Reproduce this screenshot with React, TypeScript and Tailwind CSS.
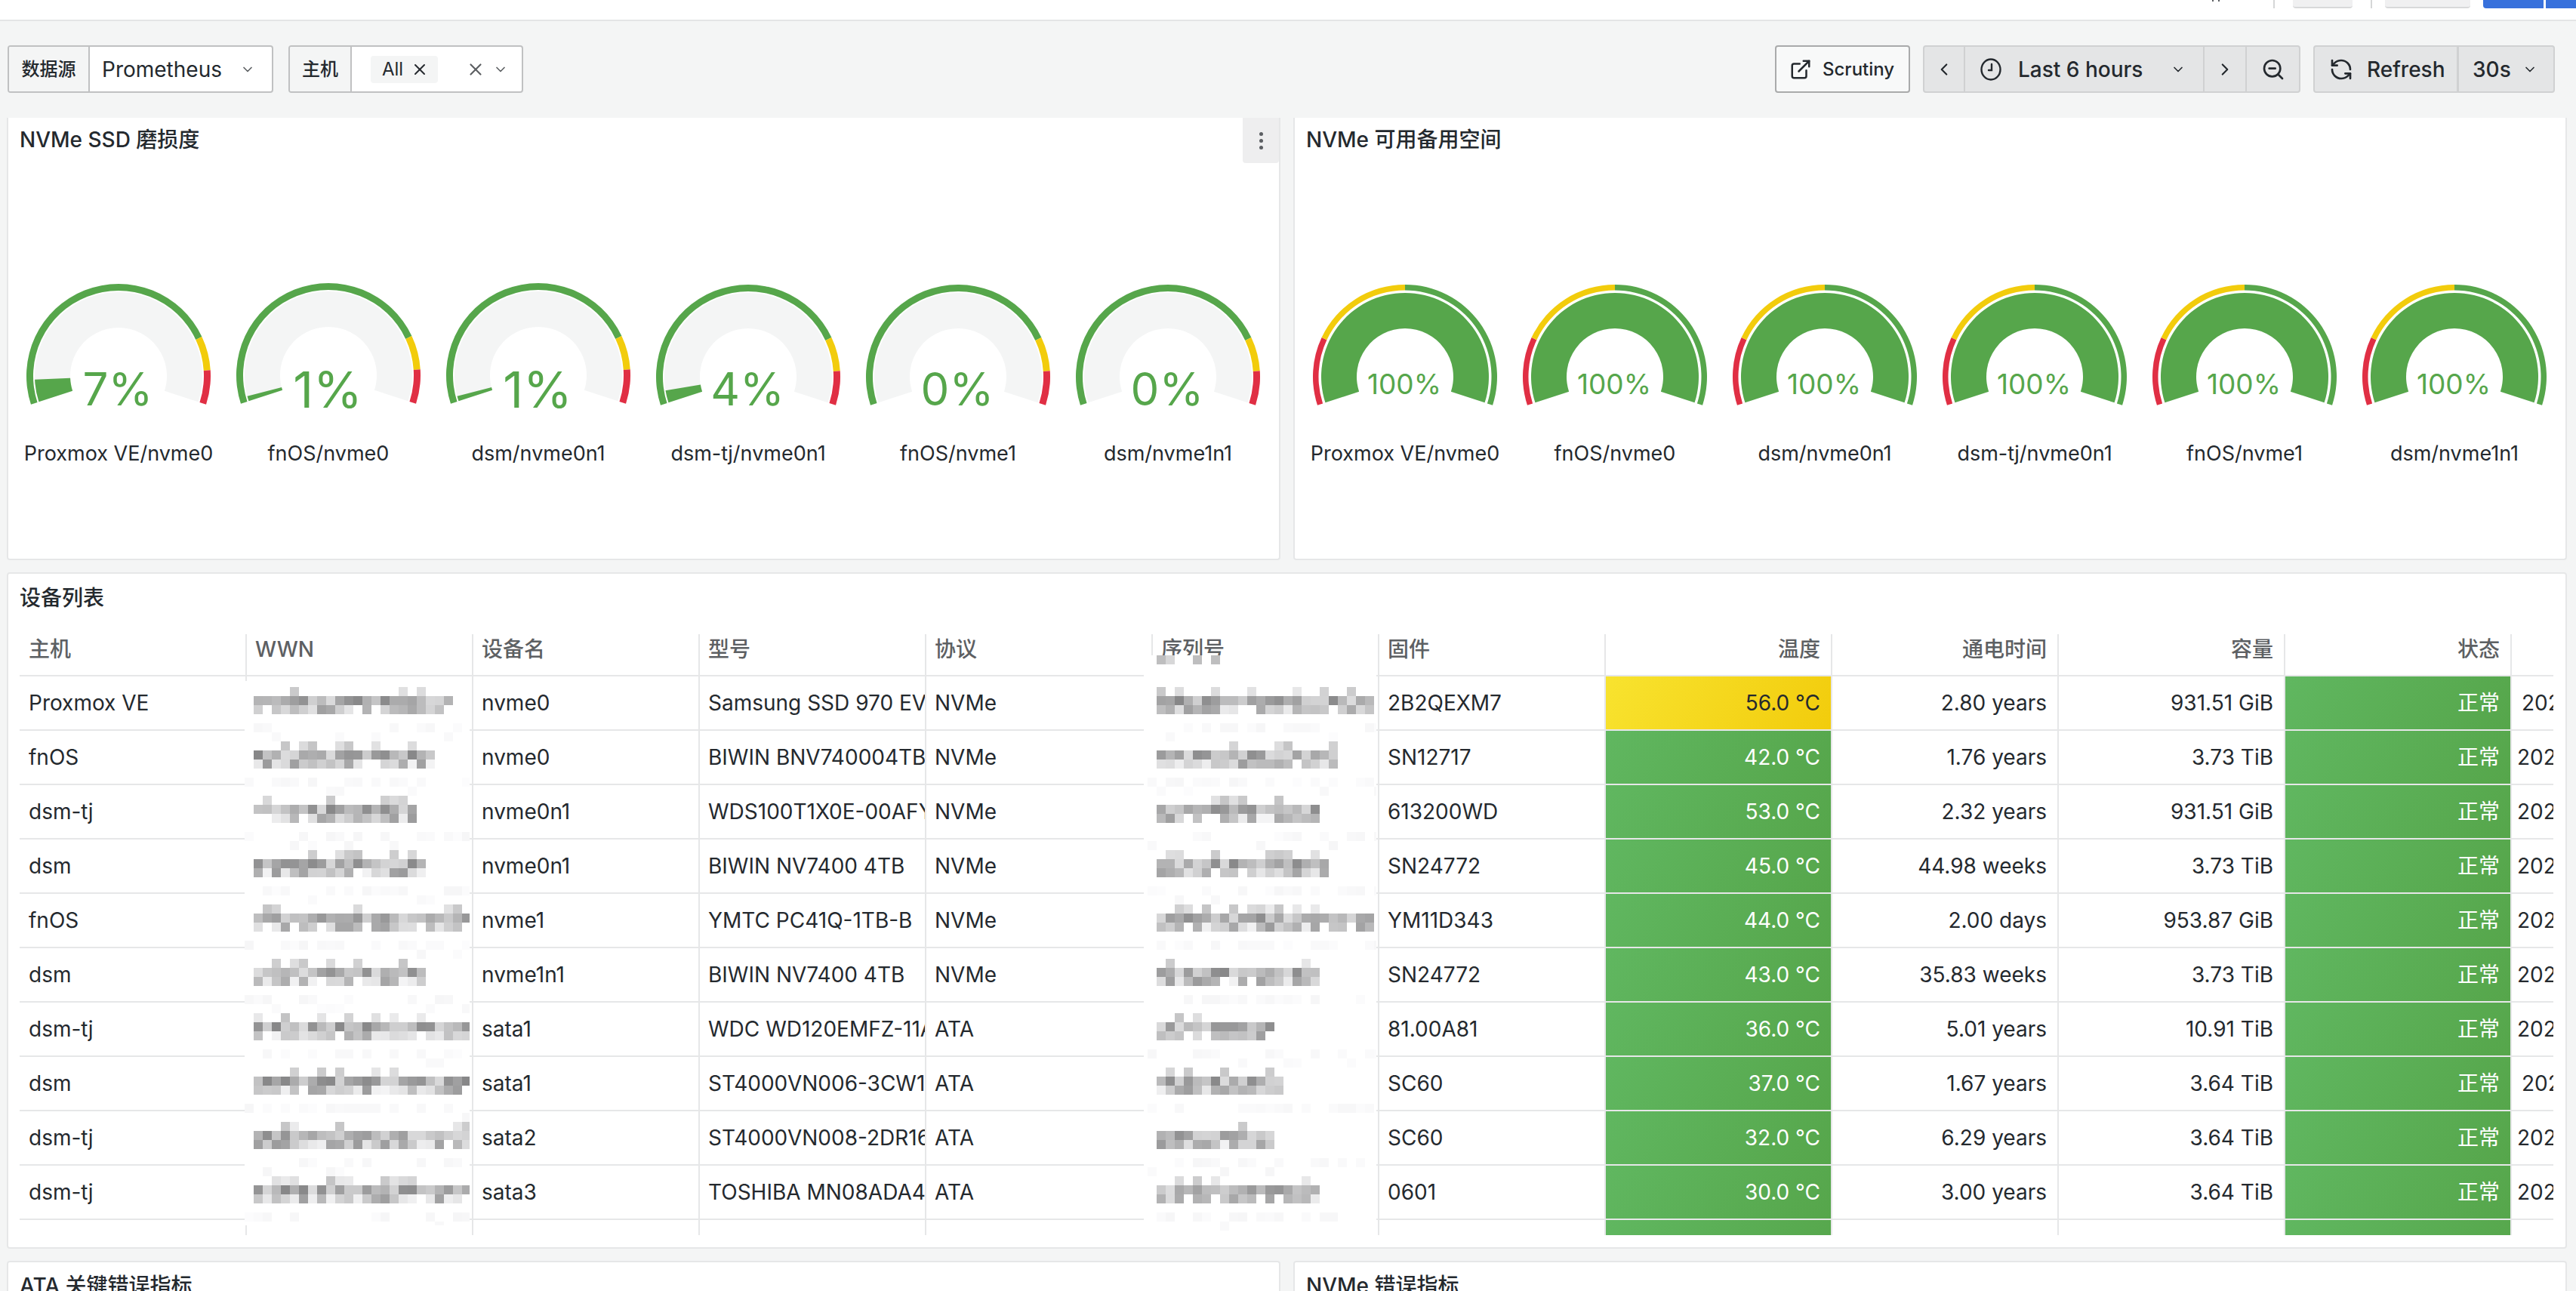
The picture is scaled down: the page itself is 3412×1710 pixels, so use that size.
import React from "react";
import { ChevronDown, ChevronLeft, ChevronRight, X, ZoomOut, RefreshCcw, ExternalLink } from "lucide-react";

const GREEN = "#56a64b";
const YELLOW = "#f2cc0c";
const RED = "#e02f44";

function pt(cx: number, cy: number, r: number, t: number) {
  const a = ((162 + t) * Math.PI) / 180;
  return `${(cx + r * Math.cos(a)).toFixed(2)} ${(cy + r * Math.sin(a)).toFixed(2)}`;
}
function sector(cx: number, cy: number, r0: number, r1: number, t0: number, t1: number) {
  const large = t1 - t0 > 180 ? 1 : 0;
  return `M${pt(cx, cy, r1, t0)}A${r1} ${r1} 0 ${large} 1 ${pt(cx, cy, r1, t1)}L${pt(cx, cy, r0, t1)}A${r0} ${r0} 0 ${large} 0 ${pt(cx, cy, r0, t0)}Z`;
}

type G = { label: string; value: string; sweep: number; cy: number; size: number; base: number };

function Gauge({ g, zones, ring }: { g: G; zones: [number, number, string][]; ring: number }) {
  const cx = 139;
  const cy = g.cy - 360;
  return (
    <div className="flex w-[278px] shrink-0 flex-col items-center">
      <svg width="278" height="204" viewBox="0 0 278 204">
        <path d={sector(cx, cy, 64, 111, 0, 216)} fill="#f4f5f5" />
        {g.sweep > 0 && <path d={sector(cx, cy, 64, 111, 0, g.sweep)} fill={GREEN} />}
        {zones.map(([a, b, c]) => (
          <path key={c} d={sector(cx, cy, 122 - ring, 122, a, b)} fill={c} />
        ))}
        <text x={cx - 1} y={g.base - 360} textAnchor="middle" fontSize={g.size} fill={GREEN} fontFamily="Inter, sans-serif">
          {g.value}
        </text>
      </svg>
      <div className="mt-[19px] whitespace-nowrap text-[27px] leading-[36px] text-[#24292e]">{g.label}</div>
    </div>
  );
}

const names = ["Proxmox VE/nvme0", "fnOS/nvme0", "dsm/nvme0n1", "dsm-tj/nvme0n1", "fnOS/nvme1", "dsm/nvme1n1"];
const wear: G[] = [
  { label: names[0], value: "7%", sweep: 15.6, cy: 498, size: 60, base: 537 },
  { label: names[1], value: "1%", sweep: 3.5, cy: 497, size: 66, base: 540 },
  { label: names[2], value: "1%", sweep: 3.5, cy: 497, size: 66, base: 540 },
  { label: names[3], value: "4%", sweep: 8.6, cy: 499, size: 60, base: 537 },
  { label: names[4], value: "0%", sweep: 0, cy: 499, size: 60, base: 537 },
  { label: names[5], value: "0%", sweep: 0, cy: 499, size: 60, base: 537 },
];
const spare: G[] = names.map((n) => ({ label: n, value: "100%", sweep: 216, cy: 499, size: 37, base: 522 }));

const rows = [
  ["Proxmox VE", "nvme0", "Samsung SSD 970 EVO Plus 1TB", "NVMe", "2B2QEXM7", "56.0 °C", "2.80 years", "931.51 GiB", "2025-10-30"],
  ["fnOS", "nvme0", "BIWIN BNV740004TB", "NVMe", "SN12717", "42.0 °C", "1.76 years", "3.73 TiB", "2025-10-30"],
  ["dsm-tj", "nvme0n1", "WDS100T1X0E-00AFY0", "NVMe", "613200WD", "53.0 °C", "2.32 years", "931.51 GiB", "2025-10-30"],
  ["dsm", "nvme0n1", "BIWIN NV7400 4TB", "NVMe", "SN24772", "45.0 °C", "44.98 weeks", "3.73 TiB", "2025-10-30"],
  ["fnOS", "nvme1", "YMTC PC41Q-1TB-B", "NVMe", "YM11D343", "44.0 °C", "2.00 days", "953.87 GiB", "2025-10-30"],
  ["dsm", "nvme1n1", "BIWIN NV7400 4TB", "NVMe", "SN24772", "43.0 °C", "35.83 weeks", "3.73 TiB", "2025-10-30"],
  ["dsm-tj", "sata1", "WDC WD120EMFZ-11A6JA0", "ATA", "81.00A81", "36.0 °C", "5.01 years", "10.91 TiB", "2025-10-30"],
  ["dsm", "sata1", "ST4000VN006-3CW104", "ATA", "SC60", "37.0 °C", "1.67 years", "3.64 TiB", "2025-10-30"],
  ["dsm-tj", "sata2", "ST4000VN008-2DR166", "ATA", "SC60", "32.0 °C", "6.29 years", "3.64 TiB", "2025-10-30"],
  ["dsm-tj", "sata3", "TOSHIBA MN08ADA400", "ATA", "0601", "30.0 °C", "3.00 years", "3.64 TiB", "2025-10-30"],
  ["", "", "", "", "", "", "", "", ""],
];

const BASE = "flex shrink-0 items-center overflow-hidden whitespace-nowrap w-[300px] border-l-2 border-[#e6e7e8]";
const L = `${BASE} pl-[11px]`;
const R = `${BASE} justify-end pr-[14px]`;
const GREENBG = "bg-[linear-gradient(120deg,#60b760,#56a64b)] text-white";
const YELLOWBG = "bg-[linear-gradient(120deg,#f8e32f,#f2cc0c)] text-[#24292e]";

function Header() {
  const heads = ["WWN", "设备名", "型号", "协议", "序列号", "固件"];
  return (
    <div className="flex h-[56px] border-b-2 border-[#e6e7e8] text-[28px] font-medium text-[#5d6063]">
      <div className="flex w-[299px] shrink-0 items-center pb-[14px] pl-[12px]">主机</div>
      {heads.map((h) => (
        <div key={h} className={`${L} pb-[14px]`}>{h}</div>
      ))}
      <div className={`${R} pb-[14px]`}>温度</div>
      <div className={`${R} pb-[14px]`}>通电时间</div>
      <div className={`${R} pb-[14px]`}>容量</div>
      <div className={`${R} pb-[14px]`}>状态</div>
      <div className={L}></div>
    </div>
  );
}

function Row({ r, i }: { r: string[]; i: number }) {
  return (
    <div className="flex h-[72px] border-b-2 border-[#e6e7e8] text-[28px] text-[#24292e]">
      <div className="flex w-[299px] shrink-0 items-center pl-[12px]">{r[0]}</div>
      <div className={L}></div>
      <div className={L}>{r[1]}</div>
      <div className={L}>{r[2]}</div>
      <div className={L}>{r[3]}</div>
      <div className={L}></div>
      <div className={L}>{r[4]}</div>
      <div className={`${R} ${i === 0 ? YELLOWBG : GREENBG}`}>{r[5]}</div>
      <div className={R}>{r[6]}</div>
      <div className={R}>{r[7]}</div>
      <div className={`${R} ${GREENBG}`}>{r[8] ? "正常" : ""}</div>
      <div className={`${BASE} ${i === 0 || i === 7 ? "pl-[13px]" : "pl-[7px]"}`}>{r[8]}</div>
    </div>
  );
}

function rng(seed: number) {
  let a = seed;
  return () => {
    a |= 0;
    a = (a + 0x6d2b79f5) | 0;
    let t = Math.imul(a ^ (a >>> 15), 1 | a);
    t = (t + Math.imul(t ^ (t >>> 7), 61 | t)) ^ t;
    return ((t ^ (t >>> 14)) >>> 0) / 4294967296;
  };
}

function Mosaic({ width, top, x0, ends, seed, firstBand }: { width: number; top: number; x0: number; ends: number[]; seed: number; firstBand?: boolean }) {
  const rand = rng(seed);
  const cells: React.ReactElement[] = [];
  const put = (x: number, y: number, v: number) => {
    const c = Math.round(v);
    cells.push(<rect key={cells.length} x={x} y={y} width={12} height={12} fill={`rgb(${c},${c},${c + 1})`} />);
  };
  const total = Math.floor((width - x0) / 12);
  ends.forEach((n, row) => {
    const y = 896 + row * 72 + 14 - top;
    for (let k = 0; k < n; k++) {
      const x = x0 + k * 12;
      if (rand() < 0.28) put(x, y, 195 + rand() * 40);
      put(x, y + 12, 135 + rand() * 85);
      const v = rand();
      if (v > 0.12) put(x, y + 24, 155 + rand() * 90);
    }
    for (let k = -1; k < total + 1; k++) {
      if (rand() < 0.55) put(x0 + k * 12, y + 48 + (rand() < 0.15 ? 12 : 0), 246 + rand() * 6);
    }
  });
  if (firstBand) {
    [0, 1, 4, 6].forEach((k) => put(x0 + k * 12, 0, k === 1 ? 215 : 190));
  }
  return (
    <svg width={width} height="100%" className="block" shapeRendering="crispEdges">
      {cells}
    </svg>
  );
}

function Panel({ title, titleClass, className, children, menu }: { title: string; titleClass: string; className: string; children?: React.ReactNode; menu?: boolean }) {
  return (
    <div className={`relative flex flex-col overflow-hidden rounded-[4px] border-x-2 border-[#e6e7e8] bg-white ${className}`}>
      <div className={`flex shrink-0 items-center pl-[15px] text-[28px] font-medium text-[#24292e] ${titleClass}`}>{title}</div>
      {menu && (
        <div className="absolute right-0 top-0 flex h-[60px] w-[48px] flex-col items-center justify-center gap-[4px] rounded-b-[4px] bg-[#eeeeef]">
          <span className="h-[5px] w-[5px] rounded-full bg-[#5c5f63]"></span>
          <span className="h-[5px] w-[5px] rounded-full bg-[#5c5f63]"></span>
          <span className="h-[5px] w-[5px] rounded-full bg-[#5c5f63]"></span>
        </div>
      )}
      {children}
    </div>
  );
}

function ClockIcon() {
  return (
    <svg width="30" height="30" viewBox="0 0 30 30" fill="none" stroke="#24292e" strokeWidth="2.4" strokeLinecap="round">
      <ellipse cx="15" cy="15" rx="12.5" ry="13.5" />
      <path d="M16 8v8h-4" />
    </svg>
  );
}

export default function App() {
  const wearZones: [number, number, string][] = [[0, 172.8, GREEN], [172.8, 194.4, YELLOW], [194.4, 216, RED]];
  const spareZones: [number, number, string][] = [[0, 43.2, RED], [43.2, 108, YELLOW], [108, 216, GREEN]];
  return (
    <div className="h-[1710px] w-[3412px] overflow-hidden bg-[#f4f5f5] font-[Inter,'Noto_Sans_CJK_SC',sans-serif] text-[#24292e]">
      {/* top nav */}
      <div className="h-[28px] border-b-2 border-[#e4e5e6] bg-white">
        <div className="flex h-[11px] items-start justify-end">
          <span className="h-[2px] w-[2px] bg-[#5d6063]"></span>
          <span className="ml-[6px] h-[2px] w-[2px] bg-[#5d6063]"></span>
          <span className="ml-[71px] h-[11px] w-[2px] bg-[#d5d6d7]"></span>
          <span className="ml-[24px] h-[11px] w-[79px] rounded-b-[4px] border-b-2 border-[#d8d9da] bg-[#f0f0f1]"></span>
          <span className="ml-[24px] h-[11px] w-[2px] bg-[#d5d6d7]"></span>
          <span className="ml-[17px] h-[11px] w-[113px] rounded-b-[4px] border-b-2 border-[#d8d9da] bg-[#f0f0f1]"></span>
          <span className="ml-[17px] h-[11px] w-[80px] rounded-bl-[4px] bg-[#3871dc]"></span>
          <span className="ml-[3px] h-[11px] w-[40px] bg-[#3871dc]"></span>
        </div>
      </div>

      {/* toolbar */}
      <div className="mb-[33px] mt-[32px] flex h-[63px] items-center pl-[10px] pr-[28px] text-[28px]">
        <div className="flex h-full w-[352px] overflow-hidden rounded-[4px] border-2 border-[#c0c1c2] bg-white">
          <div className="flex w-[107px] shrink-0 items-center justify-center border-r-2 border-[#c0c1c2] bg-[#f4f5f5] text-[24px] font-medium">数据源</div>
          <div className="flex flex-1 items-center pl-[16px]">
            <span>Prometheus</span>
            <ChevronDown size={20} strokeWidth={2} className="ml-[24px] text-[#5d6063]" />
          </div>
        </div>
        <div className="ml-[20px] flex h-full w-[311px] overflow-hidden rounded-[4px] border-2 border-[#c0c1c2] bg-white">
          <div className="flex w-[82px] shrink-0 items-center justify-center border-r-2 border-[#c0c1c2] bg-[#f4f5f5] text-[24px] font-medium">主机</div>
          <div className="flex flex-1 items-center pl-[25px]">
            <div className="flex h-[36px] w-[89px] items-center rounded-[4px] bg-[#f4f5f5] pl-[15px] text-[24px]">
              <span>All</span>
              <X size={24} strokeWidth={2} className="ml-[10px]" />
            </div>
            <X size={26} strokeWidth={2} className="ml-[37px] text-[#5d6063]" />
            <ChevronDown size={20} strokeWidth={2} className="ml-[10px] text-[#5d6063]" />
          </div>
        </div>

        <div className="ml-auto flex h-full w-[179px] items-center rounded-[4px] border-2 border-[#a9aaab] bg-[#f8f9f9] pl-[17px] text-[24px] font-medium">
          <ExternalLink size={30} strokeWidth={2} />
          <span className="ml-[14px]">Scrutiny</span>
        </div>

        <div className="ml-[17px] flex h-full w-[500px] overflow-hidden rounded-[4px] border-2 border-[#d0d1d2] bg-[#e4e5e6] font-medium">
          <div className="flex w-[54px] items-center justify-center border-r-2 border-[#d0d1d2]">
            <ChevronLeft size={26} strokeWidth={2} />
          </div>
          <div className="flex w-[317px] items-center border-r-2 border-[#d0d1d2] pl-[19px]">
            <ClockIcon />
            <span className="ml-[21px]">Last 6 hours</span>
            <ChevronDown size={20} strokeWidth={2} className="ml-[37px]" />
          </div>
          <div className="flex w-[56px] items-center justify-center border-r-2 border-[#d0d1d2]">
            <ChevronRight size={26} strokeWidth={2} />
          </div>
          <div className="flex flex-1 items-center justify-center">
            <ZoomOut size={32} strokeWidth={2} />
          </div>
        </div>

        <div className="ml-[17px] flex h-full w-[320px] overflow-hidden rounded-[4px] border-2 border-[#d0d1d2] bg-[#e4e5e6] font-medium">
          <div className="flex w-[191px] items-center border-r-[3px] border-[#d0d1d2] pl-[19px]">
            <RefreshCcw size={32} strokeWidth={2} />
            <span className="ml-[18px]">Refresh</span>
          </div>
          <div className="flex flex-1 items-center pl-[18px]">
            <span>30s</span>
            <ChevronDown size={20} strokeWidth={2} className="ml-[15px]" />
          </div>
        </div>
      </div>

      {/* row 1 */}
      <div className="grid grid-cols-[1687px_1687px] gap-x-[17px] pl-[9px]">
        <Panel title="NVMe SSD 磨损度" titleClass="h-[58px]" className="h-[586px] rounded-t-none border-b-2" menu>
          <div className="mt-[146px] flex pl-[7px]">
            {wear.map((g) => (
              <Gauge key={g.label} g={g} zones={wearZones} ring={9} />
            ))}
          </div>
        </Panel>
        <Panel title="NVMe 可用备用空间" titleClass="h-[58px]" className="h-[586px] rounded-t-none border-b-2">
          <div className="mt-[146px] flex pl-[7px]">
            {spare.map((g) => (
              <Gauge key={g.label} g={g} zones={spareZones} ring={7.5} />
            ))}
          </div>
        </Panel>
      </div>

      {/* table */}
      <div className="mb-[16px] ml-[9px] mt-[16px] w-[3391px]">
        <Panel title="设备列表" titleClass="h-[64px] mb-[16px]" className="h-[896px] border-y-2">
          <div className="relative ml-[15px] h-[796px] w-[3356px] overflow-hidden">
            <Header />
            {rows.map((r, i) => (
              <Row key={i} r={r} i={i} />
            ))}
            <div className="absolute left-[298px] top-[62px] h-[721px] w-[298px] bg-white">
              <Mosaic width={298} top={902} x0={12} seed={11} ends={[22, 20, 18, 19, 25, 19, 25, 25, 25, 25]} />
            </div>
            <div className="absolute left-[1489px] top-[28px] h-[768px] w-[308px] bg-white">
              <Mosaic width={308} top={868} x0={17} seed={29} ends={[24, 20, 18, 19, 24, 18, 13, 14, 13, 18]} firstBand />
            </div>
          </div>
        </Panel>
      </div>

      {/* row 3 */}
      <div className="grid grid-cols-[1687px_1687px] gap-x-[17px] pl-[9px]">
        <Panel title="ATA 关键错误指标" titleClass="h-[62px]" className="h-[120px] border-t-2">
        </Panel>
        <Panel title="NVMe 错误指标" titleClass="h-[62px]" className="h-[120px] border-t-2">
        </Panel>
      </div>
    </div>
  );
}
